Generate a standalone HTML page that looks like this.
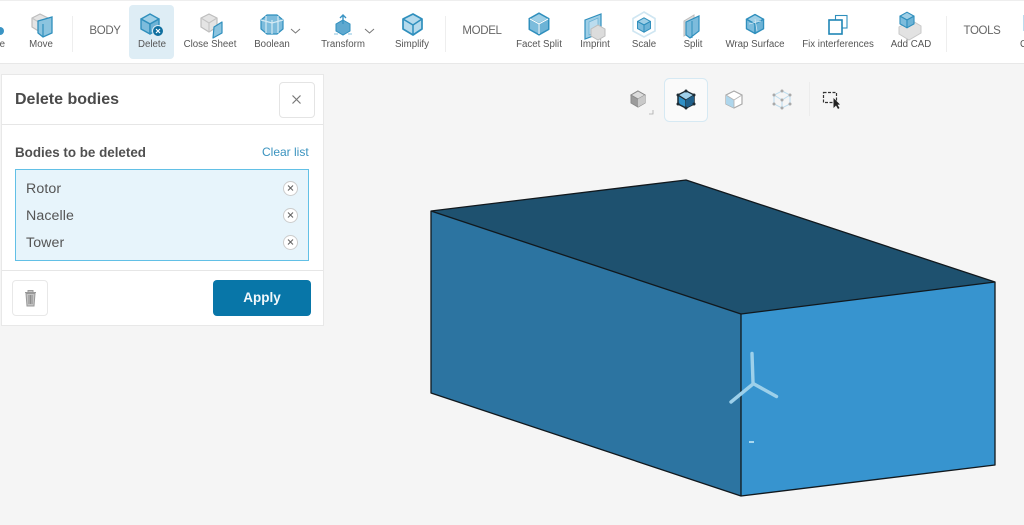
<!DOCTYPE html>
<html><head><meta charset="utf-8"><style>
html,body{margin:0;padding:0}
body{width:1024px;height:525px;overflow:hidden;background:#f5f5f5;position:relative;font-family:"Liberation Sans",sans-serif;color:#555}
.a{position:absolute}
.l{position:absolute;top:39px;font-size:9.7px;line-height:12px;color:#555;transform:translateX(-50%);white-space:nowrap}
.h{position:absolute;top:23.500px;font-size:11.5px;line-height:15px;color:#666;transform:translateX(-50%);white-space:nowrap;letter-spacing:-.35px}
.s{position:absolute;top:16px;width:1px;height:36px;background:#eee}
.t{position:absolute;left:26px;font-size:14.200px;line-height:16px;color:#555;letter-spacing:.1px}
.x{position:absolute;left:283px;width:15px;height:15px;box-sizing:border-box;border:1px solid #ccc;border-radius:50%;background:#fff}
svg{position:absolute;left:0;top:0}
</style></head><body>
<div class="a" style="left:0;top:0;width:1024px;height:64px;background:#fff;border-top:1px solid #eee;border-bottom:1px solid #e8e8e8;box-sizing:border-box"></div>
<div class="a" style="left:129px;top:5px;width:45px;height:54px;background:#deedf5;border-radius:4px"></div>
<div class="s" style="left:72px"></div><div class="s" style="left:445px"></div><div class="s" style="left:946px"></div>

<svg width="1024" height="525" viewBox="0 0 1024 525">
<defs>
<g id="c"><path d="M0-10 9-5V5L0 10-9 5V-5Z" fill="#fff"/><path d="M0-10 9-5 0 0-9-5Z" fill="#9fcfe6" stroke="#2f8fbd" stroke-width="1.4" stroke-linejoin="round"/><path d="M-9-5 0 0V10L-9 5Z" fill="#7dbcdc" stroke="#2f8fbd" stroke-width="1.4" stroke-linejoin="round"/><path d="M9-5 0 0V10L9 5Z" fill="#6db3d6" stroke="#2f8fbd" stroke-width="1.4" stroke-linejoin="round"/></g>
<g id="g"><path d="M0-9 8-5V4L0 9-8 4V-5Z" fill="#e4e4e4" stroke="#bdbdbd" stroke-width="1.2" stroke-linejoin="round"/><path d="M-8-5 0 0 8-5M0 0V9" fill="none" stroke="#c4c4c4" stroke-width="1.1"/></g>
</defs>
<g style="filter:blur(.35px)">
<!-- left edge partial icon -->
<circle cx="0" cy="31" r="4" fill="#3a94c4"/>
<!-- move -->
<use href="#g" x="40" y="23"/><path d="M38 21 52 17V33L43 37 38 33Z" fill="#8cc4df" stroke="#2f8fbd" stroke-width="1.3"/><path d="M43 24V37" stroke="#2f8fbd" stroke-width="1.2"/>
<!-- delete -->
<use href="#c" x="150" y="24"/><circle cx="158" cy="31" r="5.5" fill="#0f6f9f" stroke="#deedf5"/><path d="M156 29 160 33M160 29 156 33" stroke="#fff" stroke-width="1.2"/>
<!-- close sheet -->
<use href="#g" x="209" y="23"/><path d="M214 27 222 22 222 33 213 38Z" fill="#8cc4df" stroke="#2f8fbd" stroke-width="1.2" stroke-linejoin="round"/>
<!-- boolean -->
<path d="M261 20 267 15H277L283 20V29L277 34H267L261 29Z" fill="#7dbcdc" stroke="#2f8fbd" stroke-width="1.2"/><path d="M266 16V33M272 20V34M278 16V33M261 20 272 23 283 20" fill="none" stroke="#d5eaf4" stroke-width="1.2"/>
<path d="M291 29 295.500 33 300 29" fill="none" stroke="#777" stroke-width="1"/>
<!-- transform -->
<path d="M343 24 350 28V35L343 39 336 35V28Z" transform="translate(0,-4)" fill="#5fa9d0" stroke="#2f8fbd"/><path d="M343 15V24M340 18 343 15 346 18" fill="none" stroke="#3a94c4" stroke-width="1.4"/><path d="M334 34H338M348 34H352" stroke="#9fcfe6" stroke-width="1.3"/>
<path d="M365 29 369.500 33 374 29" fill="none" stroke="#777" stroke-width="1"/>
<!-- simplify -->
<path d="M413 14 422 19V29L413 35 403 29V19Z" fill="#b5daec" stroke="#2f8fbd" stroke-width="1.7" stroke-linejoin="round"/><path d="M403 19 413 25 422 19M413 25V35" fill="none" stroke="#2f8fbd" stroke-width="1.5"/>
<!-- facet split -->
<use href="#c" transform="translate(539 24) scale(1.08)"/><path d="M530 19 539 24 548 19M539 24V34" fill="none" stroke="#fff" stroke-width="1.2"/>
<!-- imprint -->
<path d="M585 20 601 14V33L585 39Z" fill="#9fcfe6" stroke="#2f8fbd" stroke-width="1.2"/><path d="M589 22 598 18V31L589 35Z" fill="#bcdcee" stroke="#6db3d6" stroke-width=".8"/><path d="M598 25 605 29V36L598 40 591 36V29Z" fill="#dcdcdc" stroke="#bdbdbd"/>
<!-- scale -->
<path d="M644 12 655 18.500V31L644 37 633 31V18.500Z" fill="#fff" stroke="#cfe6f2" stroke-width="1.6"/><use href="#c" transform="translate(644 25) scale(.72)"/>
<!-- split -->
<path d="M684 21 694 15 694 30 684 36Z" fill="#ddd" stroke="#bbb"/><path d="M686 22 699 16V31L690 38 686 35Z" fill="#7dbcdc" stroke="#2f8fbd" stroke-width="1.2"/><path d="M692 21V38" stroke="#2f8fbd"/>
<!-- wrap -->
<use href="#c" transform="translate(755 24) scale(.95)"/><path d="M749 24 761 21M755 19 757 31" stroke="#cfe6f2" stroke-width=".8"/>
<!-- fix -->
<rect x="835.500" y="15.500" width="11.500" height="12.500" fill="#fff" stroke="#2f8fbd" stroke-width="1.1"/><rect x="829" y="20" width="13" height="14" fill="#fff" stroke="#1f85b5" stroke-width="1.6"/>
<!-- add cad -->
<path d="M899 27 911 20 921 26V33L909 40 899 34Z" fill="#e2e2e2" stroke="#c8c8c8"/><use href="#c" transform="translate(907 20) scale(.78)"/>
<!-- right edge -->
<rect x="1023" y="15" width="1" height="16" fill="#bcdcee"/>

<!-- view cube bar -->
<g transform="translate(638 99)"><path d="M0-8 7-4V4L0 8-7 4V-4Z" fill="#9b9b9b" stroke="#8a8a8a"/><path d="M0-8 7-4 0 0-7-4Z" fill="#dcdcdc" stroke="#8a8a8a"/><path d="M7-4 0 0V8L7 4Z" fill="#c9c9c9"/></g>
<path d="M653 110V114H649" fill="none" stroke="#aaa" stroke-width=".8"/>
<rect x="664.500" y="78.500" width="43" height="43" rx="5" fill="#fafafa" stroke="#d6e9f3"/>
<g transform="translate(686 99)"><path d="M0-8 8-4V5L0 9-8 5V-4Z" fill="#2f8fc5" stroke="#1d2b33" stroke-width="1.5"/><path d="M0-8 8-4 0 1-8-4Z" fill="#9fd0ea" stroke="#1d2b33" stroke-width="1.2"/><path d="M0 1V9" stroke="#1d2b33" stroke-width="1.3"/><path d="M8-4 0 1V9L8 5Z" fill="#1f5f8a"/><g fill="#1d2b33"><circle cy="-8" r="1.500"/><circle cx="8" cy="-4" r="1.500"/><circle cx="8" cy="5" r="1.500"/><circle cy="9" r="1.500"/><circle cx="-8" cy="5" r="1.500"/><circle cx="-8" cy="-4" r="1.500"/></g></g>
<g transform="translate(734 99)"><path d="M0-8 8-4V5L0 9-8 5V-4Z" fill="#fff" stroke="#a9a9a9" stroke-width="1.2"/><path d="M-8-4 0 1V9L-8 5Z" fill="#aed6ec"/><path d="M-8-4 0 1 8-4M0 1V9" fill="none" stroke="#b5b5b5" stroke-width=".9"/></g>
<g transform="translate(782 99)" fill="none"><path d="M0-8 8-4V5L0 9-8 5V-4ZM-8-4 0 1 8-4M0 1V9" stroke="#bcdcee" stroke-width="1"/><g fill="#a9a9a9"><circle cy="-8" r="1.500"/><circle cx="8" cy="-4" r="1.500"/><circle cx="8" cy="5" r="1.500"/><circle cy="9" r="1.500"/><circle cx="-8" cy="5" r="1.500"/><circle cx="-8" cy="-4" r="1.500"/><circle cy="1" r="1.500"/></g></g>
<rect x="809" y="82" width="1" height="34" fill="#ececec"/>
<rect x="823.500" y="92.500" width="13" height="10" fill="none" stroke="#333" stroke-width="1.200" stroke-dasharray="3 1.500"/>
<path d="M833.500 98 V108 L836 105.500 838 109 839.500 108 837.500 104.800 840 104.500Z" fill="#222"/>
</g>

<!-- box -->
<path d="M431 211 686 180 995 282 741 314Z" fill="#1e516f"/>
<path d="M431 211 741 314V496L431 393Z" fill="#2c74a1"/>
<path d="M741 314 995 282V465L741 496Z" fill="#3794cf"/>
<path d="M431 211 686 180 995 282V465L741 496 431 393ZM431 211 741 314 995 282M741 314V496" fill="none" stroke="#11181d" stroke-width="1.300" stroke-linejoin="round"/>
<!-- turbine -->
<path d="M752 353.500 753 382.500M753 384 731 402M754 384 776.500 396.500" stroke="#9dd0ea" stroke-width="3.400" stroke-linecap="round" fill="none"/>
<rect x="749" y="441" width="5" height="2" fill="#a9d8ef"/>
</svg>

<div class="l" style="left:1px">te</div>
<div class="l" style="left:41px">Move</div>
<div class="h" style="left:105px">BODY</div>
<div class="l" style="left:152px">Delete</div>
<div class="l" style="left:210px">Close Sheet</div>
<div class="l" style="left:272px">Boolean</div>
<div class="l" style="left:343px">Transform</div>
<div class="l" style="left:412px">Simplify</div>
<div class="h" style="left:482px">MODEL</div>
<div class="l" style="left:539px">Facet Split</div>
<div class="l" style="left:595px">Imprint</div>
<div class="l" style="left:644px">Scale</div>
<div class="l" style="left:693px">Split</div>
<div class="l" style="left:755px">Wrap Surface</div>
<div class="l" style="left:838px">Fix interferences</div>
<div class="l" style="left:911px">Add CAD</div>
<div class="h" style="left:982px">TOOLS</div>
<div class="l" style="left:1020px;transform:none">C</div>

<!-- panel -->
<div class="a" style="left:1px;top:74px;width:323px;height:252px;background:#fff;border:1px solid #e8e8e8;box-sizing:border-box"></div>
<div class="a" style="left:2px;top:124px;width:321px;height:1px;background:#e6e6e6"></div>
<div class="a" style="left:2px;top:270px;width:321px;height:1px;background:#e6e6e6"></div>
<div class="a" style="left:15px;top:90px;font-size:16px;line-height:19px;font-weight:bold;color:#4a4a4a;white-space:nowrap">Delete bodies</div>
<div class="a" style="left:279px;top:82px;width:36px;height:36px;box-sizing:border-box;border:1px solid #e4e4e4;border-radius:4px;background:#fff"></div>
<svg width="1024" height="525" style="pointer-events:none">
<path d="M292.500 95.500 300.500 103.500M300.500 95.500 292.500 103.500" stroke="#777" stroke-width="1.200"/>
</svg>
<div class="a" style="left:15px;top:144.500px;font-size:13.400px;line-height:16px;font-weight:bold;color:#505050;white-space:nowrap">Bodies to be deleted</div>
<div class="a" style="left:262px;top:144.500px;font-size:12px;line-height:15px;color:#3a93bf;white-space:nowrap">Clear list</div>
<div class="a" style="left:15px;top:169px;width:294px;height:92px;box-sizing:border-box;background:#e7f4fb;border:1px solid #62c0e6"></div>
<div class="t" style="top:181px">Rotor</div>
<div class="t" style="top:208px">Nacelle</div>
<div class="t" style="top:235px">Tower</div>
<div class="x" style="top:180.500px"></div><div class="x" style="top:207.500px"></div><div class="x" style="top:234.500px"></div>
<svg width="1024" height="525"><path d="M288 185.500 293 190.500M293 185.500 288 190.500M288 212.500 293 217.500M293 212.500 288 217.500M288 239.500 293 244.500M293 239.500 288 244.500" stroke="#666" stroke-width="1.100"/></svg>
<div class="a" style="left:12px;top:280px;width:36px;height:36px;box-sizing:border-box;border:1px solid #e8e8e8;border-radius:4px"></div>
<svg width="1024" height="525"><path d="M25 292.500H36M28 292V290.500H33V292M26 293.500 27 306H34L35 293.500Z" fill="#c4c4c4" stroke="#999"/><path d="M29 295V304M30.500 295V304M32 295V304" stroke="#777" stroke-width=".7"/></svg>
<div class="a" style="left:213px;top:280px;width:98px;height:36px;border-radius:4px;background:#0876a8;color:#f2f8fb;font-size:13.500px;font-weight:bold;line-height:36px;text-align:center">Apply</div>
</body></html>
